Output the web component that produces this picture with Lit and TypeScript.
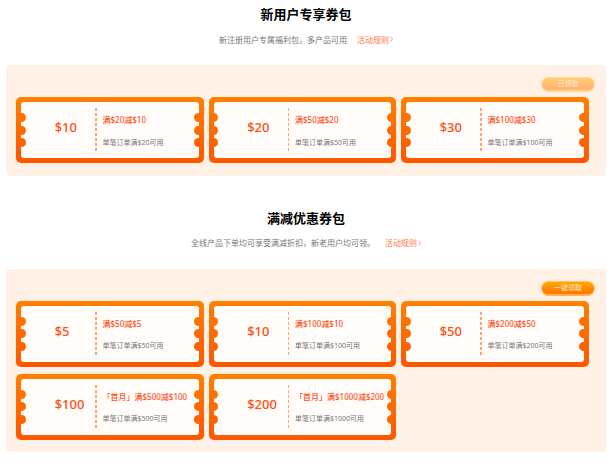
import { LitElement, html, css } from "lit";
import { customElement } from "lit/decorators.js";

interface Coupon { amount: string; title: string; sub: string; }

const SETS = [
  {
    title: "新用户专享券包",
    desc: "新注册用户专属福利包，多产品可用",
    button: "已领取",
    claimed: true,
    coupons: [
      { amount: "$10", title: "满$20减$10", sub: "单笔订单满$20可用" },
      { amount: "$20", title: "满$50减$20", sub: "单笔订单满$50可用" },
      { amount: "$30", title: "满$100减$30", sub: "单笔订单满$100可用" },
    ] as Coupon[],
  },
  {
    title: "满减优惠券包",
    desc: "全线产品下单均可享受满减折扣，新老用户均可领。",
    button: "一键领取",
    claimed: false,
    coupons: [
      { amount: "$5", title: "满$50减$5", sub: "单笔订单满$50可用" },
      { amount: "$10", title: "满$100减$10", sub: "单笔订单满$100可用" },
      { amount: "$50", title: "满$200减$50", sub: "单笔订单满$200可用" },
      { amount: "$100", title: "「首月」满$500减$100", sub: "单笔订单满$500可用" },
      { amount: "$200", title: "「首月」满$1000减$200", sub: "单笔订单满$1000可用" },
    ] as Coupon[],
  },
];

@customElement("app-root")
export class AppRoot extends LitElement {
  static styles = css`
    :host {
      display: block;
      width: 614px;
      font-family: "Noto Sans", "Noto Sans CJK SC", sans-serif;
      background: #fff;
    }
    .section { padding: 0 8px 28px 6px; }
    .heading {
      margin: 0;
      height: 28px;
      line-height: 28px;
      text-align: center;
      font-size: 13px;
      font-weight: 700;
      color: #000;
    }
    .desc {
      height: 22px;
      margin-bottom: 15px;
      display: flex;
      justify-content: center;
      align-items: center;
      font-size: 8px;
      color: #777;
    }
    .rule {
      margin-left: 10px;
      display: flex;
      align-items: center;
      gap: 1px;
      color: #ff7448;
    }
    .rule svg { width: 3px; height: 6px; }
    .panel {
      background: #fff1e6;
      border-radius: 4px;
      padding: 12px 17px 12.5px 10px;
      display: flex;
      flex-direction: column;
    }
    .action { display: flex; justify-content: flex-end; margin: 0 -6px 5px 0; }
    .btn {
      width: 54px;
      height: 15px;
      box-sizing: border-box;
      border-radius: 8px;
      border: 1px solid #ffc65c;
      border-bottom: 2px solid #ffb347;
      background: linear-gradient(180deg, #ffa800, #ff7400);
      color: #ffe9d0;
      font-size: 7px;
      line-height: 11px;
      text-align: center;
    }
    .btn.claimed { opacity: 0.5; }
    .grid {
      display: grid;
      grid-template-columns: repeat(3, 187.5px);
      column-gap: 5px;
      row-gap: 7px;
    }
    .coupon {
      position: relative;
      height: 66px;
      box-sizing: border-box;
      padding: 5px;
      border-radius: 5px;
      background: linear-gradient(180deg, #ff8000, #ff5500);
    }
    .ticket {
      height: 56px;
      display: flex;
      background: #fffcfa;
      border-radius: 3px;
    }
    .bumps {
      position: absolute;
      top: 16px;
      display: flex;
      flex-direction: column;
      gap: 3.5px;
    }
    .bumps.left { left: 0.5px; }
    .bumps.right { right: 0.5px; }
    .bump { width: 9px; height: 9px; border-radius: 50%; }
    .bump:nth-child(1) { background: #ff7200; }
    .bump:nth-child(2) { background: #ff6a00; }
    .bump:nth-child(3) { background: #ff6300; }
    .amount {
      width: 74px;
      box-sizing: border-box;
      padding-left: 33.7px;
      font-size: 13px;
      font-weight: 500;
      line-height: 50px;
      color: #ff4f14;
      flex: none;
    }
    .divider {
      flex: none;
      width: 1.5px;
      margin: 6px 0;
      background: repeating-linear-gradient(180deg, #ffa277 0 3px, transparent 3px 5px);
    }
    .info { padding: 13px 0 0 6px; white-space: nowrap; }
    .info-title {
      font-size: 8px;
      line-height: 10px;
      font-weight: 500;
      color: #ff5224;
    }
    .info-sub {
      margin-top: 12.5px;
      font-size: 7px;
      line-height: 10px;
      color: #777;
    }
  `;

  private bumps(side: string) {
    return html`<div class="bumps ${side}">
      <div class="bump"></div><div class="bump"></div><div class="bump"></div>
    </div>`;
  }

  render() {
    return SETS.map(
      (s) => html`
        <section class="section">
          <h2 class="heading">${s.title}</h2>
          <div class="desc">
            <span>${s.desc}</span>
            <span class="rule">活动规则
              <svg viewBox="0 0 3 6"><polyline points="0.4,0.6 2.6,3 0.4,5.4" fill="none" stroke="#ff7448" stroke-width="0.7"></polyline></svg>
            </span>
          </div>
          <div class="panel">
            <div class="action">
              <div class="btn ${s.claimed ? "claimed" : ""}">${s.button}</div>
            </div>
            <div class="grid">
              ${s.coupons.map(
                (c) => html`
                  <div class="coupon">
                    <div class="ticket">
                      <div class="amount">${c.amount}</div>
                      <div class="divider"></div>
                      <div class="info">
                        <div class="info-title">${c.title}</div>
                        <div class="info-sub">${c.sub}</div>
                      </div>
                    </div>
                    ${this.bumps("left")}${this.bumps("right")}
                  </div>
                `
              )}
            </div>
          </div>
        </section>
      `
    );
  }
}
